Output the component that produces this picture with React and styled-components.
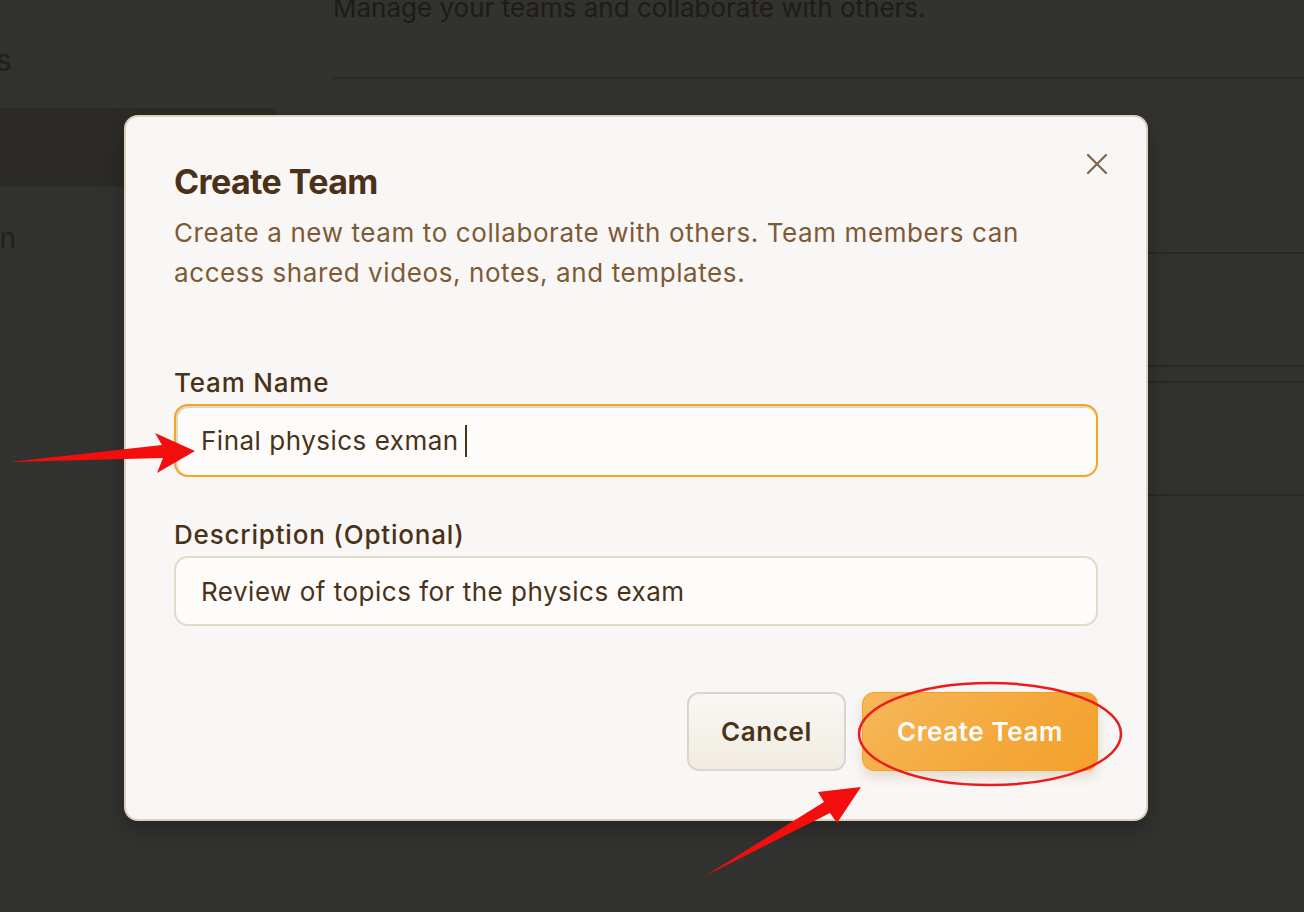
import React from "react";
import styled, { createGlobalStyle } from "styled-components";

const Global = createGlobalStyle`
  html, body { margin: 0; padding: 0; }
  body {
    background: #323230;
    font-family: Inter, "Noto Sans", "Liberation Sans", sans-serif;
    overflow: hidden;
  }
  * { box-sizing: border-box; }
`;

const Page = styled.div`
  position: relative;
  width: 1304px;
  height: 912px;
  display: flex;
  background: #323230;
  overflow: hidden;
`;

const Sidebar = styled.aside`
  width: 333px;
  flex: none;
  display: flex;
  flex-direction: column;
`;

const SidebarTitle = styled.div`
  margin: 42px 0 0 -83px;
  font-size: 30px;
  line-height: 36px;
  font-weight: 500;
  color: #24201b;
`;

const SidebarActive = styled.div`
  margin-top: 30px;
  width: 277px;
  height: 79px;
  background: #2c2b27;
  border-radius: 0 8px 8px 0;
`;

const SidebarItem = styled.div`
  margin: 34px 0 0 -40px;
  font-size: 28px;
  line-height: 34px;
  color: #24201b;
`;

const Main = styled.main`
  flex: 1;
  display: flex;
  flex-direction: column;
`;

const Subtitle = styled.div`
  margin-top: -8px;
  font-size: 26px;
  line-height: 32px;
  color: #1f1b16;
  padding-bottom: 53px;
  border-bottom: 2px solid #2a2925;
`;

const Row = styled.div`
  height: ${(p) => p.$h}px;
  border-bottom: 2px solid #2a2925;
`;

const Overlay = styled.div`
  position: absolute;
  inset: 0;
`;

const Dialog = styled.div`
  position: absolute;
  left: 124px;
  top: 115px;
  width: 1024px;
  height: 706px;
  background: #f9f7f5;
  border: 2px solid #ddd1ba;
  border-radius: 14px;
  padding: 44px 48px 48px;
  display: flex;
  flex-direction: column;
  box-shadow: 0 10px 24px rgba(0, 0, 0, 0.25);
`;

const Close = styled.button`
  position: absolute;
  top: 35px;
  right: 37px;
  width: 24px;
  height: 24px;
  padding: 0;
  border: none;
  background: transparent;
  display: flex;
  align-items: center;
  justify-content: center;
  color: #7d6547;
`;

const Title = styled.h2`
  margin: 0;
  font-size: 34px;
  line-height: 42px;
  font-weight: 700;
  letter-spacing: -0.6px;
  color: #4b3118;
`;

const Description = styled.p`
  margin: 10px 0 0;
  font-size: 26px;
  line-height: 40px;
  letter-spacing: 0.6px;
  color: #7d5a36;
  max-width: 880px;
`;

const Field = styled.div`
  display: flex;
  flex-direction: column;
  margin-top: ${(p) => p.$mt}px;
`;

const Label = styled.label`
  font-size: 26px;
  line-height: 36px;
  font-weight: 500;
  letter-spacing: 0.8px;
  color: #4a3219;
  margin-bottom: 3px;
`;

const InputBox = styled.div`
  height: ${(p) => p.$h}px;
  background: #fdfcfb;
  border: 2px solid ${(p) => (p.$focus ? "#f2a522" : "#e2d9c8")};
  border-radius: 14px;
  padding: 0 25px;
  display: flex;
  align-items: center;
  font-size: 26px;
  letter-spacing: 0.5px;
  color: #4a3219;
  box-shadow: ${(p) =>
    p.$focus ? "inset 1px 1px 0 1px #e0d7c6" : "none"};
`;

const Caret = styled.span`
  display: inline-block;
  width: 2px;
  height: 32px;
  background: #4a3219;
  margin-left: 6px;
`;

const Actions = styled.div`
  margin-top: auto;
  display: flex;
  justify-content: flex-end;
  gap: 16px;
`;

const Button = styled.button`
  height: 79px;
  padding: 0 ${(p) => (p.$primary ? 34 : 32)}px;
  border-radius: 12px;
  font-family: inherit;
  font-size: 26px;
  font-weight: 600;
  letter-spacing: 0.6px;
  cursor: pointer;
  ${(p) =>
    p.$primary
      ? `
    background: linear-gradient(135deg, #f7b75a 0%, #f4a83a 60%, #f3a22c 100%);
    border: 1px solid #f1a021;
    color: #ffffff;
    box-shadow: 0 6px 12px rgba(120, 80, 20, 0.18);
  `
      : `
    background: linear-gradient(180deg, #f8f7f4 0%, #f1ece1 100%);
    border: 2px solid #d9d5d1;
    color: #4a3219;
  `}
`;

const Annotations = styled.svg`
  position: absolute;
  inset: 0;
  pointer-events: none;
`;

export default function App() {
  return (
    <>
      <Global />
      <Page>
        <Sidebar>
          <SidebarTitle>Teams</SidebarTitle>
          <SidebarActive />
          <SidebarItem>Join</SidebarItem>
        </Sidebar>
        <Main>
          <Subtitle>Manage your teams and collaborate with others.</Subtitle>
          <Row $h={175} />
          <Row $h={113} />
          <Row $h={16} />
          <Row $h={113} />
        </Main>
        <Overlay>
          <Dialog>
            <Close aria-label="Close">
              <svg width="20" height="20" viewBox="0 0 20 20">
                <path
                  d="M1 1 L19 19 M19 1 L1 19"
                  stroke="currentColor"
                  strokeWidth="2.2"
                  strokeLinecap="round"
                />
              </svg>
            </Close>
            <Title>Create Team</Title>
            <Description>
              Create a new team to collaborate with others. Team members can
              access shared videos, notes, and templates.
            </Description>
            <Field $mt={72}>
              <Label>Team Name</Label>
              <InputBox $h={73} $focus>
                Final physics exman
                <Caret />
              </InputBox>
            </Field>
            <Field $mt={40}>
              <Label>Description (Optional)</Label>
              <InputBox $h={70}>Review of topics for the physics exam</InputBox>
            </Field>
            <Actions>
              <Button>Cancel</Button>
              <Button $primary>Create Team</Button>
            </Actions>
          </Dialog>
        </Overlay>
        <Annotations width="1304" height="912" viewBox="0 0 1304 912">
          <polygon
            points="10,462 162,445 155,433 195,451 157,473 163,458"
            fill="#f30d0d"
          />
          <polygon
            points="705,876 824,802 818,792 861,787 837,823 830,813"
            fill="#f30d0d"
          />
          <ellipse
            cx="990"
            cy="734"
            rx="131"
            ry="51"
            fill="none"
            stroke="#ec1b1b"
            strokeWidth="2.5"
          />
        </Annotations>
      </Page>
    </>
  );
}
